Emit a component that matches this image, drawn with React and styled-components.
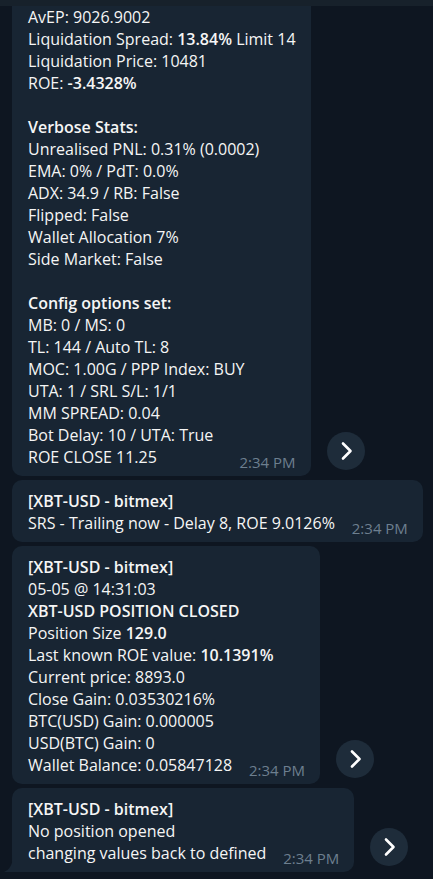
import React from "react";
import styled, { createGlobalStyle } from "styled-components";

const Global = createGlobalStyle`
  html, body { margin: 0; padding: 0; background: #0e1621; }
  body { font-family: "Open Sans", "Noto Sans", sans-serif; }
  #root { min-height: 879px; }
`;

const Page = styled.div`
  width: 433px;
  height: 879px;
  overflow: hidden;
  background: #0e1621;
  display: flex;
  flex-direction: column;
`;

const TopBar = styled.div`
  height: 6px;
  flex: none;
  background: #17212b;
`;

const List = styled.div`
  display: flex;
  flex-direction: column;
  gap: 4px;
  padding: 0 0 0 12px;
`;

const Row = styled.div`
  display: flex;
  align-items: flex-end;
  gap: 16px;
`;

const Bubble = styled.div`
  position: relative;
  width: fit-content;
  background: #182533;
  color: #f5f5f5;
  font-size: 16px;
  line-height: 22px;
  padding: ${(p) => (p.$cut ? "0" : "10px")} 15px 8px 16px;
  border-radius: ${(p) => (p.$cut ? "0 0 10px 10px" : p.$tail ? "10px 10px 10px 0" : "10px")};
  white-space: pre;
`;

const Line = styled.div`
  min-height: 22px;
`;

const B = styled.span`
  font-weight: 600;
`;

const Spacer = styled.span`
  display: inline-block;
  width: 73px;
  height: 1px;
`;

const Time = styled.span`
  position: absolute;
  right: 15px;
  bottom: 5px;
  font-size: 15px;
  line-height: 17px;
  color: #6d7f8f;
`;

const Tail = styled.svg`
  position: absolute;
  left: -8px;
  bottom: 0;
  width: 9px;
  height: 17px;
`;

const Circle = styled.button`
  flex: none;
  width: 38px;
  height: 38px;
  margin-bottom: 6px;
  border: 0;
  padding: 0;
  border-radius: 50%;
  background: #1e2c3a;
  display: flex;
  align-items: center;
  justify-content: center;
`;

const Chevron = () => (
  <svg width="38" height="38" viewBox="0 0 38 38">
    <path d="M16 11.5 L23.5 19 L16 26.5" fill="none" stroke="#ffffff" strokeWidth="2.6" strokeLinecap="round" strokeLinejoin="round" />
  </svg>
);

const Message = ({ lines, cut, tail, share }) => (
  <Row>
    <Bubble $cut={cut} $tail={tail}>
      {lines.map((l, i) => (
        <Line key={i}>
          {l}
          {i === lines.length - 1 && <Spacer />}
        </Line>
      ))}
      <Time>2:34 PM</Time>
      {tail && (
        <Tail viewBox="0 0 9 17">
          <path d="M9 0 V17 H0 C5 15 9 10 9 0 Z" fill="#182533" />
        </Tail>
      )}
    </Bubble>
    {share && (
      <Circle aria-label="share">
        <Chevron />
      </Circle>
    )}
  </Row>
);

const m1 = [
  "AvEP: 9026.9002",
  <>Liquidation Spread: <B>13.84%</B> Limit 14</>,
  "Liquidation Price: 10481",
  <>ROE: <B>-3.4328%</B></>,
  "",
  <B>Verbose Stats:</B>,
  "Unrealised PNL: 0.31% (0.0002)",
  "EMA: 0% / PdT: 0.0%",
  "ADX: 34.9 / RB: False",
  "Flipped: False",
  "Wallet Allocation 7%",
  "Side Market: False",
  "",
  <B>Config options set:</B>,
  "MB: 0 / MS: 0",
  "TL: 144 / Auto TL: 8",
  "MOC: 1.00G / PPP Index: BUY",
  "UTA: 1 / SRL S/L: 1/1",
  "MM SPREAD: 0.04",
  "Bot Delay: 10 / UTA: True",
  "ROE CLOSE 11.25",
];

const m2 = [
  <B>[XBT-USD - bitmex]</B>,
  "SRS - Trailing now - Delay 8, ROE 9.0126%",
];

const m3 = [
  <B>[XBT-USD - bitmex]</B>,
  "05-05 @ 14:31:03",
  <B>XBT-USD POSITION CLOSED</B>,
  <>Position Size <B>129.0</B></>,
  <>Last known ROE value: <B>10.1391%</B></>,
  "Current price: 8893.0",
  "Close Gain: 0.03530216%",
  "BTC(USD) Gain: 0.000005",
  "USD(BTC) Gain: 0",
  "Wallet Balance: 0.05847128",
];

const m4 = [
  <B>[XBT-USD - bitmex]</B>,
  "No position opened",
  "changing values back to defined",
];

export default function App() {
  return (
    <Page>
      <Global />
      <TopBar />
      <List>
        <Message lines={m1} cut share />
        <Message lines={m2} />
        <Message lines={m3} share />
        <Message lines={m4} tail share />
      </List>
    </Page>
  );
}
